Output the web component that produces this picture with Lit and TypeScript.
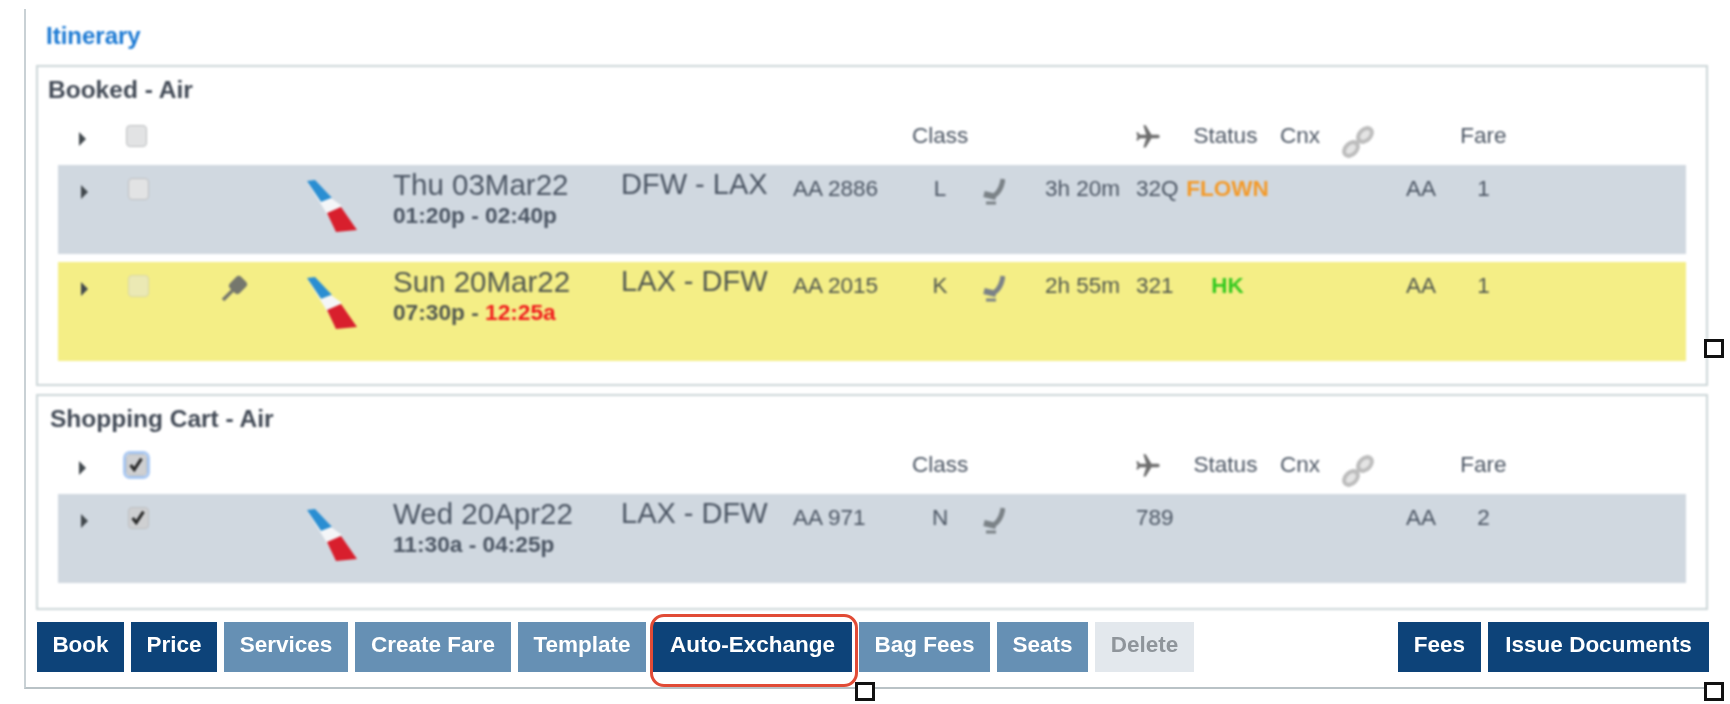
import { LitElement, css, html, svg } from 'lit';
import { customElement } from 'lit/decorators.js';
import { classMap } from 'lit/directives/class-map.js';
import { styleMap } from 'lit/directives/style-map.js';

interface Segment {
  date: string;
  route: string;
  times: string;
  lateArrival?: string;
  flight: string;
  cls: string;
  duration: string;
  equipment: string;
  status?: string;
  statusKind?: string;
  fare: string;
  checked?: boolean;
  dimmed?: boolean;
  pinned?: boolean;
  tall?: boolean;
}

const booked: Segment[] = [
  { date: 'Thu 03Mar22', route: 'DFW - LAX', times: '01:20p - 02:40p', flight: 'AA 2886', cls: 'L', duration: '3h 20m', equipment: '32Q', status: 'FLOWN', statusKind: 'flown', fare: '1' },
  { date: 'Sun 20Mar22', route: 'LAX - DFW', times: '07:30p - ', lateArrival: '12:25a', flight: 'AA 2015', cls: 'K', duration: '2h 55m', equipment: '321', status: 'HK', statusKind: 'ok', fare: '1', dimmed: true, pinned: true, tall: true },
];

const cart: Segment[] = [
  { date: 'Wed 20Apr22', route: 'LAX - DFW', times: '11:30a - 04:25p', flight: 'AA 971', cls: 'N', duration: '', equipment: '789', fare: '2', checked: true },
];

const leftButtons: [string, string, number][] = [
  ['Book', 'primary', 87],
  ['Price', 'primary', 86],
  ['Services', 'muted', 124],
  ['Create Fare', 'muted', 156],
  ['Template', 'muted', 128],
  ['Auto-Exchange', 'primary marked', 199],
  ['Bag Fees', 'muted', 131],
  ['Seats', 'muted', 91],
  ['Delete', 'disabled', 99],
];

const caret = html`<svg class="caret" viewBox="0 0 9 14"><path d="M1 0l7 7-7 7z" fill="#41484d" /></svg>`;

const tail = html`<svg class="logo" viewBox="0 0 57 58">
  <polygon points="4,4 12,3 29,21 18,25" fill="#2a8ed2" />
  <polygon points="3,3 18,25 28,21 39,29 26,36 32,50" fill="#f4f6f8" />
  <polygon points="24,36 38,30 54,53 33,55" fill="#d81f2d" />
</svg>`;

const pin = html`<svg class="pin" viewBox="0 0 30 30">
  <rect x="10" y="5" width="16" height="14" rx="4" fill="#75776d" transform="rotate(-45 18 12)" />
  <path d="M13 17L3 27" stroke="#75776d" stroke-width="3.5" />
</svg>`;

const seat = html`<svg class="seat" viewBox="0 0 24 29" fill="none" stroke="#7b8287">
  <path d="M22 2C21 9 18 15 14 18" stroke-width="5" />
  <path d="M3 17l12 3" stroke-width="6" />
  <path d="M5 26h10" stroke-width="3" />
</svg>`;

const plane = html`<svg class="plane" viewBox="0 0 24 24">
  <g transform="rotate(90 12 12)">
    ${svg`<path fill="#6e6e6e" d="M21 16v-2l-8-5V3.5c0-.83-.67-1.5-1.5-1.5S10 2.67 10 3.5V9l-8 5v2l8-2.5V19l-2 1.5V22l3.5-1 3.5 1v-1.5L13 19v-5.5l8 2.5z" />`}
  </g>
</svg>`;

const chain = html`<svg class="chain" viewBox="0 0 33 33" fill="#e4e4e4" stroke="#bdbdbd" stroke-width="4">
  <ellipse cx="23" cy="10" rx="8" ry="5.5" transform="rotate(-45 23 10)" />
  <ellipse cx="9" cy="24" rx="8" ry="5.5" transform="rotate(-45 9 24)" />
  <path d="M13 20l6-6" />
</svg>`;

const checkbox = (checked = false, dimmed = false, focused = false) => html`
  <span class=${classMap({ check: true, checked, dimmed, focused })}>
    ${checked ? html`<svg viewBox="0 0 21 22"><path d="M4 11l4 5 8-12" fill="none" stroke="#2a2a2a" stroke-width="3.4" /></svg>` : ''}
  </span>
`;

@customElement('app-root')
export class AppRoot extends LitElement {
  static styles = css`
    :host {
      display: block;
      width: 1730px;
      height: 704px;
      background: #fff;
      font-family: "Liberation Sans", Arial, sans-serif;
      font-size: 22.5px;
      color: #4b5563;
      overflow: hidden;
    }

    .frame {
      position: relative;
      box-sizing: border-box;
      width: 1690px;
      height: 680px;
      margin: 9px 0 0 24px;
      padding: 12px 5px 0 10px;
      border-left: 2px solid #c9d1d5;
      border-bottom: 2px solid #b9c2c6;
    }

    .itinerary {
      margin-bottom: 14px;
      padding-left: 10px;
      font-size: 24px;
      font-weight: 700;
      line-height: 30px;
      color: #1b79d3;
      filter: blur(0.8px);
    }

    .panel {
      margin-right: 1px;
      padding: 9px 20px 23px;
      border: 2px solid #ccd6d8;
      filter: blur(0.8px);
    }

    .panel + .panel {
      margin-top: 8px;
      padding-bottom: 25px;
    }

    .panel-title {
      margin-left: -10px;
      font-size: 24.5px;
      font-weight: 700;
      line-height: 28px;
      color: #414955;
    }

    .panel + .panel .panel-title {
      margin-left: -8px;
    }

    .grid {
      display: grid;
      grid-template-columns: 48px 92px 85px 88px 228px 172px 119px 69px 64px 91px 50px 94px 62px 64px 54px 47px;
      align-items: start;
      padding-left: 22px;
      line-height: 26px;
      white-space: nowrap;
    }

    .head {
      box-sizing: border-box;
      height: 61px;
      padding-top: 19px;
    }

    .head .caret {
      margin: 9px 0 0 -2px;
    }

    .head .check {
      margin: 2px 0 0 -2px;
    }

    .head .chain {
      margin-top: 2px;
    }

    .row {
      height: 89px;
      margin-bottom: 8px;
      background: #d0d8e0;
    }

    .row:last-child {
      margin-bottom: 0;
    }

    .row.tall {
      height: 99px;
      background: #f4ee86;
      color: #50574f;
    }

    .row .caret {
      margin-top: 20px;
    }

    .row .check {
      margin-top: 13px;
    }

    .caret {
      display: block;
      width: 9px;
      height: 14px;
    }

    .check {
      display: block;
      box-sizing: border-box;
      width: 21px;
      height: 22px;
      background: #e2e3e4;
      border: 1px solid #bdbfc1;
      border-radius: 4px;
    }

    .check svg {
      display: block;
      width: 19px;
      height: 20px;
    }

    .check.checked {
      background: #cfd0d2;
    }

    .check.dimmed {
      background: #ebe9b4;
      border-color: #d8d7a8;
    }

    .check.focused {
      outline: 3px solid #a9c8f2;
    }

    .pin {
      display: block;
      width: 30px;
      height: 30px;
      margin-top: 11px;
    }

    .logo {
      display: block;
      width: 57px;
      height: 58px;
      margin: 12px 0 0 -2px;
    }

    .date {
      padding-top: 4px;
      font-size: 29.5px;
      line-height: 32px;
    }

    .times {
      font-size: 22.7px;
      font-weight: 700;
      line-height: 28px;
    }

    .late {
      color: #f01c1c;
    }

    .route {
      padding-top: 3px;
      font-size: 29px;
      line-height: 32px;
    }

    .cell {
      margin-top: 11px;
    }

    .head .cell {
      margin-top: 0;
    }

    .class-cell {
      width: 56px;
      text-align: center;
    }

    .seat {
      display: block;
      width: 24px;
      height: 29px;
      margin-top: 12px;
    }

    .plane {
      display: block;
      width: 28px;
      height: 28px;
      margin-left: -2px;
    }

    .chain {
      display: block;
      width: 33px;
      height: 33px;
    }

    .status-cell {
      width: 83px;
      text-align: center;
      font-weight: 700;
    }

    .head .status-cell {
      margin-left: -2px;
      font-weight: 400;
    }

    .flown {
      color: #f39a2a;
    }

    .ok {
      color: #35c91f;
    }

    .fare-cell {
      text-align: center;
    }

    .actions {
      display: flex;
      gap: 7px;
      margin: 12px 0 0 1px;
    }

    .btn {
      position: relative;
      height: 50px;
      line-height: 46px;
      text-align: center;
      font-weight: 700;
      color: #fff;
      white-space: nowrap;
    }

    .btn-label {
      display: block;
      filter: blur(0.7px);
    }

    .primary {
      background: #0d4379;
    }

    .muted {
      background: #6690b4;
    }

    .disabled {
      background: #e3e8ed;
      color: #8f959b;
    }

    .spacer {
      margin-left: auto;
    }

    /* red callout around the button under discussion */
    .marked::after {
      content: '';
      position: absolute;
      inset: -8px -6px -15px -3px;
      border: 3px solid #e14b36;
      border-radius: 14px;
    }

    .handle {
      position: absolute;
      box-sizing: border-box;
      width: 20px;
      height: 19px;
      background: #fff;
      border: 3px solid #111;
    }

    .handle.right {
      left: 1678px;
      top: 330px;
    }

    .handle.bottom-mid {
      left: 829px;
      top: 673px;
    }

    .handle.bottom-right {
      left: 1678px;
      top: 673px;
    }
  `;

  private renderHead(checked: boolean) {
    return html`
      <div class="grid head">
        ${caret}
        ${checkbox(checked, false, checked)}
        <span></span><span></span><span></span><span></span><span></span>
        <span class="cell class-cell">Class</span>
        <span></span><span></span>
        ${plane}
        <span class="cell status-cell">Status</span>
        <span class="cell">Cnx</span>
        ${chain}
        <span></span>
        <span class="cell fare-cell">Fare</span>
      </div>
    `;
  }

  private renderRow(s: Segment) {
    return html`
      <div class="grid row ${s.tall ? 'tall' : ''}">
        ${caret}
        ${checkbox(s.checked, s.dimmed)}
        ${s.pinned ? pin : html`<span></span>`}
        ${tail}
        <div>
          <div class="date">${s.date}</div>
          <div class="times">${s.times}${s.lateArrival ? html`<span class="late">${s.lateArrival}</span>` : ''}</div>
        </div>
        <div class="route">${s.route}</div>
        <span class="cell">${s.flight}</span>
        <span class="cell class-cell">${s.cls}</span>
        ${seat}
        <span class="cell">${s.duration}</span>
        <span class="cell">${s.equipment}</span>
        <span class="cell status-cell ${s.statusKind ?? ''}">${s.status ?? ''}</span>
        <span></span><span></span>
        <span class="cell">AA</span>
        <span class="cell fare-cell">${s.fare}</span>
      </div>
    `;
  }

  private renderPanel(title: string, rows: Segment[], checked: boolean) {
    return html`
      <section class="panel">
        <div class="panel-title">${title}</div>
        ${this.renderHead(checked)}
        ${rows.map((r) => this.renderRow(r))}
      </section>
    `;
  }

  private renderButton(label: string, kind: string, width: number) {
    return html`<div class="btn ${kind}" style=${styleMap({ width: `${width}px` })}><span class="btn-label">${label}</span></div>`;
  }

  render() {
    return html`
      <div class="frame">
        <div class="itinerary">Itinerary</div>
        ${this.renderPanel('Booked - Air', booked, false)}
        ${this.renderPanel('Shopping Cart - Air', cart, true)}
        <div class="actions">
          ${leftButtons.map(([label, kind, width]) => this.renderButton(label, kind, width))}
          ${this.renderButton('Fees', 'primary spacer', 83)}
          ${this.renderButton('Issue Documents', 'primary', 221)}
        </div>
        <span class="handle right"></span>
        <span class="handle bottom-mid"></span>
        <span class="handle bottom-right"></span>
      </div>
    `;
  }
}
